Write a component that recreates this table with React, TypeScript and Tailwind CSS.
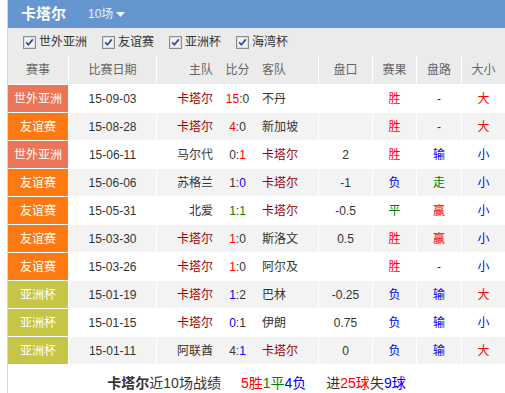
const FONT = "font-['Liberation_Sans','Noto_Sans_CJK_SC',sans-serif]";

type Row = {
  league: string;
  date: string;
  home: string;
  hs: string;
  as: string;
  away: string;
  hc?: string; // score colour for home goals
  ac?: string;
  line: string;
  result: string;
  pan: string;
  size: string;
};

const RED = "text-[#ff0000]";
const BLUE = "text-[#0000ff]";
const GREEN = "text-[#008000]";
const DARK = "text-[#333333]";

const rows: Row[] = [
  { league: "世外亚洲", date: "15-09-03", home: "卡塔尔", hs: "15", as: "0", away: "不丹", hc: RED, line: "", result: "胜", pan: "-", size: "大" },
  { league: "友谊赛", date: "15-08-28", home: "卡塔尔", hs: "4", as: "0", away: "新加坡", hc: RED, line: "", result: "胜", pan: "-", size: "大" },
  { league: "世外亚洲", date: "15-06-11", home: "马尔代", hs: "0", as: "1", away: "卡塔尔", ac: RED, line: "2", result: "胜", pan: "输", size: "小" },
  { league: "友谊赛", date: "15-06-06", home: "苏格兰", hs: "1", as: "0", away: "卡塔尔", ac: BLUE, line: "-1", result: "负", pan: "走", size: "小" },
  { league: "友谊赛", date: "15-05-31", home: "北爱", hs: "1", as: "1", away: "卡塔尔", hc: GREEN, ac: GREEN, line: "-0.5", result: "平", pan: "赢", size: "小" },
  { league: "友谊赛", date: "15-03-30", home: "卡塔尔", hs: "1", as: "0", away: "斯洛文", hc: RED, line: "0.5", result: "胜", pan: "赢", size: "小" },
  { league: "友谊赛", date: "15-03-26", home: "卡塔尔", hs: "1", as: "0", away: "阿尔及", hc: RED, line: "", result: "胜", pan: "-", size: "小" },
  { league: "亚洲杯", date: "15-01-19", home: "卡塔尔", hs: "1", as: "2", away: "巴林", hc: BLUE, line: "-0.25", result: "负", pan: "输", size: "大" },
  { league: "亚洲杯", date: "15-01-15", home: "卡塔尔", hs: "0", as: "1", away: "伊朗", hc: BLUE, line: "0.75", result: "负", pan: "输", size: "小" },
  { league: "亚洲杯", date: "15-01-11", home: "阿联酋", hs: "4", as: "1", away: "卡塔尔", ac: BLUE, line: "0", result: "负", pan: "输", size: "大" },
];

const leagueBg: Record<string, string> = {
  世外亚洲: "bg-[#ea7558]",
  友谊赛: "bg-[#fd7a13]",
  亚洲杯: "bg-[#c6c545]",
};

const resultColor: Record<string, string> = { 胜: RED, 负: BLUE, 平: GREEN };
const panColor: Record<string, string> = { 赢: RED, 输: BLUE, 走: GREEN, "-": DARK };
const sizeColor: Record<string, string> = { 大: RED, 小: BLUE };

const GRID = "grid grid-cols-[61px_88px_62px_37px_63px_54px_44px_45px_43px]";

function CheckBox() {
  return (
    <svg width="13" height="13" viewBox="0 0 13 13" className="shrink-0">
      <rect x="0.5" y="0.5" width="12" height="12" fill="#f2f2f2" stroke="#8c8c8c" />
      <rect x="1.5" y="1.5" width="10" height="10" fill="none" stroke="#dcdcdc" />
      <path d="M3.2 6.4 L5.4 8.8 L9.8 3.4" fill="none" stroke="#2b47a6" strokeWidth="1.7" />
    </svg>
  );
}

export default function App() {
  const filters = ["世外亚洲", "友谊赛", "亚洲杯", "海湾杯"];
  return (
    <div className={`${FONT} w-[505px] h-[393px] overflow-hidden bg-white pl-[7px] text-[12px]`}>
      <div className="border-l border-[#d6d6d6] h-full w-[498px] flex flex-col">
        {/* title bar */}
        <div className="h-[28px] bg-[#6596cf] flex items-center pl-[13px] shrink-0">
          <span className="text-white font-bold text-[15px]">卡塔尔</span>
          <span className="ml-[22px] text-[#e6f2ff] text-[12px] flex items-center">
            10场
            <svg width="9" height="5" viewBox="0 0 9 5" className="ml-[3px] mt-[1px]">
              <path d="M0 0 H9 L4.5 5 Z" fill="#f2f8ff" />
            </svg>
          </span>
        </div>

        {/* filters */}
        <div className="h-[28px] bg-[#ebebeb] flex items-center pl-[15px] gap-[15px] shrink-0">
          {filters.map((f) => (
            <label key={f} className="flex items-center gap-[3px] text-[#333] text-[12px]">
              <CheckBox />
              <span>{f}</span>
            </label>
          ))}
        </div>

        {/* header */}
        <div className={`${GRID} h-[29px] bg-[#ebebeb] border-b border-white text-[#666] shrink-0`}>
          <div className="border-r border-white flex items-center justify-center">赛事</div>
          <div className="border-r border-white flex items-center justify-center">比赛日期</div>
          <div className="flex items-center justify-end pr-[6px]">主队</div>
          <div className="flex items-center justify-center">比分</div>
          <div className="border-r border-white flex items-center pl-[6px]">客队</div>
          <div className="border-r border-white flex items-center justify-center">盘口</div>
          <div className="border-r border-white flex items-center justify-center">赛果</div>
          <div className="border-r border-white flex items-center justify-center">盘路</div>
          <div className="flex items-center justify-center">大小</div>
        </div>

        {/* rows */}
        {rows.map((r, i) => (
          <div
            key={i}
            className={`${GRID} h-[28px] border-b border-white shrink-0 ${i % 2 === 1 ? "bg-[#f3f3f3]" : "bg-white"}`}
          >
            <div className={`${leagueBg[r.league]} border-r border-white text-white flex items-center justify-center`}>
              {r.league}
            </div>
            <div className="border-r border-white flex items-center justify-center text-[#333]">{r.date}</div>
            <div className={`flex items-center justify-end pr-[6px] ${r.home === "卡塔尔" ? "text-[#990000]" : "text-[#333]"}`}>
              {r.home}
            </div>
            <div className="flex items-center justify-center text-[#333]">
              <span className={r.hc ?? ""}>{r.hs}</span>:<span className={r.ac ?? ""}>{r.as}</span>
            </div>
            <div className={`border-r border-white flex items-center pl-[6px] ${r.away === "卡塔尔" ? "text-[#990000]" : "text-[#333]"}`}>
              {r.away}
            </div>
            <div className="border-r border-white flex items-center justify-center text-[#333]">{r.line}</div>
            <div className={`border-r border-white flex items-center justify-center ${resultColor[r.result]}`}>{r.result}</div>
            <div className={`border-r border-white flex items-center justify-center ${panColor[r.pan]}`}>{r.pan}</div>
            <div className={`flex items-center justify-center ${sizeColor[r.size]}`}>{r.size}</div>
          </div>
        ))}

        {/* summary */}
        <div className="h-[36px] flex items-center justify-center text-[14px] text-[#333] shrink-0">
          <span className="font-bold">卡塔尔</span>
          <span>近10场战绩</span>
          <span className="ml-[20px]">
            <span className={RED}>5胜</span>
            <span className={GREEN}>1平</span>
            <span className={BLUE}>4负</span>
          </span>
          <span className="ml-[20px]">
            进<span className={RED}>25球</span>失<span className={BLUE}>9球</span>
          </span>
        </div>
      </div>
    </div>
  );
}
